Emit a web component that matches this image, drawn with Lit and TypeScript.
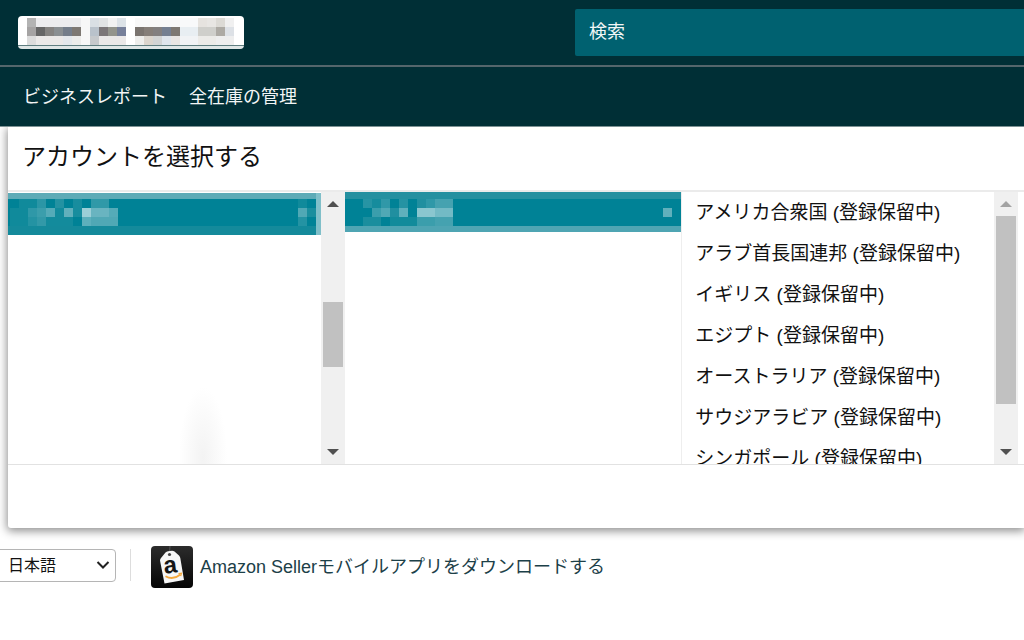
import { LitElement, html, svg, css } from "lit";
import { customElement, property } from "lit/decorators.js";

type Cell = [number, number, string, number?, number?];

const NAME_CELLS: Cell[] = [
  [0, 0, "#b3b3b3"], [0, 1, "#a5a3a3"], [0, 2, "#dcdcdc"],
  [1, 0, "#ececee", 5], [1, 1, "#666666"], [2, 1, "#858381"], [3, 1, "#8a8f92"], [4, 1, "#747d8a"], [5, 1, "#7d7872"],
  [1, 2, "#ebe9e8", 3], [4, 2, "#e4e8ec"], [5, 2, "#ececea"],
  [6, 0, "#f7f7f7", 1, 3],
  [7, 0, "#d9dfe4"], [7, 1, "#b9c2cb"], [7, 2, "#c6c9cc"],
  [8, 0, "#e1e3e4"], [8, 1, "#7b7678"], [9, 1, "#93948c"], [10, 1, "#77809a"],
  [9, 0, "#f2f2f2"], [10, 0, "#dde3e8"], [8, 2, "#eae8e8", 3],
  [11, 0, "#ffffff", 1, 3],
  [12, 0, "#f8f8f8", 5], [12, 1, "#7a746f"], [13, 1, "#857e78"], [14, 1, "#827f7f"], [15, 1, "#747f91"], [16, 1, "#7d7872"],
  [12, 2, "#eeeeec"], [13, 2, "#dbd5cd"], [14, 2, "#d2d4d4"], [15, 2, "#dfe5ec"], [16, 2, "#e9e6e3"],
  [17, 0, "#f8f9fa", 2], [17, 1, "#e8eef2", 2], [17, 2, "#f1f3f5", 2],
  [19, 0, "#e6e3df"], [20, 0, "#e8e6e3"], [21, 0, "#dcdad5"], [22, 0, "#f0f0f0"],
  [19, 1, "#cfcfcb", 2], [21, 1, "#adaaa4"], [22, 1, "#dde1e6"],
  [19, 2, "#ecebe8", 2], [21, 2, "#eeeeee", 2],
];
const FIRST_CELLS: Cell[] = [
  [0, 1, "#108a9b", 2, 2], [1, 0, "#108a9b", 2], [3, 0, "#2b96a6"], [5, 0, "#2492a2"], [7, 0, "#188d9e"], [9, 0, "#3099a8", 2],
  [2, 1, "#2f98a8"], [3, 1, "#3b9eac"], [4, 1, "#55abb8"], [5, 1, "#138b9c"], [6, 1, "#61b0bc"], [7, 1, "#188d9e"],
  [8, 1, "#9ccfd7"], [9, 1, "#69b4c0", 2], [11, 1, "#55abb8"],
  [2, 2, "#2493a3"], [3, 2, "#3299a8"], [4, 2, "#138b9c", 3], [8, 2, "#5db0bc"], [9, 2, "#50a8b5", 3],
];
const SECOND_CELLS: Cell[] = [
  [0, 0, "#2794a4"], [1, 0, "#168c9d"], [2, 0, "#3098a8"], [4, 0, "#2593a3"], [6, 0, "#208fa0"], [7, 0, "#2f98a8"], [8, 0, "#45a2b0", 2],
  [1, 1, "#3b9eac"], [2, 1, "#50a8b5"], [3, 1, "#208fa0"], [4, 1, "#60b0bc"], [6, 1, "#8ac6cf", 2], [8, 1, "#73bac5", 2],
  [0, 2, "#1a8e9e", 2], [3, 2, "#128b9b", 3], [6, 2, "#3b9eac", 2], [8, 2, "#45a2b0", 2],
];

const mosaic = (cells: Cell[], columns: number) => svg`
  <svg class="mosaic" width=${columns * 9} height="27" viewBox="0 0 ${columns} 3" preserveAspectRatio="none"
    shape-rendering="crispEdges" aria-hidden="true">
    ${cells.map(([x, y, fill, w = 1, h = 1]) => svg`<rect x=${x} y=${y} width=${w} height=${h} fill=${fill}></rect>`)}
  </svg>`;

@customElement("scroll-rail")
class ScrollRail extends LitElement {
  @property({ type: Number }) before = 0;
  @property({ type: Number }) size = 1;
  @property({ type: Number }) after = 0;
  @property({ type: Boolean, reflect: true }) top = false;

  static styles = css`
    :host { display: flex; flex-direction: column; width: 24px; background: #f0f0f0; }
    .arrow { height: 24px; display: grid; place-items: center; flex: none; }
    .arrow svg { display: block; fill: #505050; }
    :host([top]) .arrow:first-child svg { fill: #a3a3a3; }
    .track { flex: 1; display: flex; flex-direction: column; padding: 0 2px; }
    .thumb { background: #c1c1c1; }
  `;

  render() {
    return html`
      <div class="arrow"><svg width="12" height="6" viewBox="0 0 12 6"><path d="M0 6 6 0l6 6z" /></svg></div>
      <div class="track">
        <div style="flex:${this.before}"></div>
        <div class="thumb" style="flex:${this.size}"></div>
        <div style="flex:${this.after}"></div>
      </div>
      <div class="arrow"><svg width="12" height="6" viewBox="0 0 12 6"><path d="M0 0h12L6 6z" /></svg></div>
    `;
  }
}

@customElement("app-root")
class AppRoot extends LitElement {
  static styles = css`
    :host {
      display: block;
      min-height: 100vh;
      overflow: hidden;
      background: #fff;
      color: #111;
      font-family: "Liberation Sans", "Noto Sans CJK JP", sans-serif;
    }
    * { box-sizing: border-box; }
    button, input, select { font: inherit; color: inherit; border: 0; margin: 0; padding: 0; }
    a { text-decoration: none; color: inherit; }

    .top {
      display: grid;
      grid-template-columns: 575fr 449fr;
      align-items: center;
      height: 67px;
      background: #002f36;
      border-bottom: 2px solid #54666c;
    }
    .account {
      display: flex;
      align-items: flex-start;
      width: 226px;
      height: 33px;
      margin-left: 18px;
      padding: 2px 0 0 9px;
      border-radius: 4px;
      background: linear-gradient(#fff 29px, #5f7e80 29px, #5f7e80 30px, #dfe6e6 30px);
    }
    .mosaic { display: block; }
    .search {
      width: 100%;
      height: 47px;
      padding: 0 14px;
      border-radius: 2px 0 0 2px;
      background: #006170;
      color: #fff;
      font-size: 18px;
      outline: 0;
    }
    .search::placeholder { color: #f2f7f7; opacity: 1; }
    .nav {
      display: flex;
      align-items: center;
      gap: 22px;
      height: 60px;
      padding: 0 23px 4px;
      background: #002f36;
      border-bottom: 1px solid #7d9295;
      color: #f2f5f5;
      font-size: 18px;
    }

    .panel {
      margin-left: 8px;
      background: #fff;
      box-shadow: 0 2px 10px 1px rgba(0, 0, 0, 0.45);
      border-radius: 0 0 0 3px;
      clip-path: inset(0 0 -20px -20px);
    }
    h1 {
      margin: 0;
      height: 65px;
      padding: 0 14px;
      line-height: 60px;
      font-size: 24px;
      font-weight: 400;
      border-bottom: 2px solid #ebebeb;
    }
    .columns {
      display: grid;
      grid-template-columns: repeat(3, 1fr);
      height: 272px;
      padding-right: 6px;
    }
    .column { display: flex; min-width: 0; overflow: hidden; }
    .smudged { background: radial-gradient(ellipse 24px 70px at 195px 265px, #f3f3f3, #fff); }
    .body { flex: 1; min-width: 0; }
    .picked {
      display: flex;
      align-items: flex-start;
      justify-content: space-between;
      width: 100%;
      height: 40px;
      padding: 7px 9px 0 18px;
      background: linear-gradient(#2590a0 7px, #008296 7px, #008296 34px, #4fa5b3 34px);
    }
    .smudged .picked {
      height: 42px;
      margin-top: 1px;
      padding: 6px 0 0 2px;
      border-right: 5px solid #80bfc9;
      background: linear-gradient(#5eabb7 6px, #008296 6px, #008296 33px, #148a9b 33px);
    }
    .list {
      margin: 0;
      padding: 0 0 0 13px;
      list-style: none;
      border-left: 1px solid #eee;
      font-size: 19px;
      line-height: 41px;
      white-space: nowrap;
    }
    .foot { height: 64px; border-top: 1px solid #e2e2e2; }

    footer {
      display: flex;
      align-items: center;
      padding-top: 18px;
      font-size: 18px;
    }
    .language {
      flex: none;
      display: grid;
      align-items: center;
      width: 120px;
      margin-left: -4px;
      padding-bottom: 4px;
    }
    .language > * { grid-area: 1 / 1; }
    .language select {
      appearance: none;
      width: 100%;
      height: 33px;
      padding: 0 11px;
      border: 1px solid #b5b5b5;
      border-radius: 4px;
      background: #fff;
      font-size: 16px;
    }
    .language svg { justify-self: end; margin-right: 6px; pointer-events: none; z-index: 1; }
    .rule { height: 36px; margin: 0 20px 0 14px; padding-bottom: 4px; }
    .rule::before { content: ""; display: block; width: 1px; height: 32px; background: #ddd; }
    .app {
      display: flex;
      align-items: center;
      gap: 7px;
      color: #1c4048;
    }
    .app span { padding-bottom: 4px; }
    .logo { display: block; flex: none; }
  `;

  countries = ["アメリカ合衆国", "アラブ首長国連邦", "イギリス", "エジプト", "オーストラリア", "サウジアラビア", "シンガポール"];

  render() {
    return html`
      <header>
        <div class="top">
          <button class="account" aria-label="アカウント">${mosaic(NAME_CELLS, 23)}</button>
          <input class="search" type="search" placeholder="検索" aria-label="検索" />
        </div>
        <nav class="nav">
          <a href="#reports">ビジネスレポート</a>
          <a href="#inventory">全在庫の管理</a>
        </nav>
      </header>

      <main class="panel">
        <h1>アカウントを選択する</h1>
        <div class="columns">
          <div class="column smudged">
            <div class="body">
              <button class="picked" aria-label="アカウント">
                ${mosaic(FIRST_CELLS, 12)}
                ${mosaic([[0, 0, "#108a9b"], [0, 1, "#50a8b5"], [1, 1, "#1a8e9e"], [0, 2, "#2493a3"]], 2)}
              </button>
            </div>
            <scroll-rail .before=${86} .size=${65} .after=${73}></scroll-rail>
          </div>
          <div class="column">
            <div class="body">
              <button class="picked" aria-label="アカウント">
                ${mosaic(SECOND_CELLS, 10)}
                ${mosaic([[0, 1, "#60b0bc"]], 1)}
              </button>
            </div>
          </div>
          <div class="column">
            <ul class="list body">
              ${this.countries.map((name) => html`<li>${name} (登録保留中)</li>`)}
            </ul>
            <scroll-rail top .before=${0} .size=${188} .after=${36}></scroll-rail>
          </div>
        </div>
        <div class="foot"></div>
      </main>

      <footer>
        <div class="language">
          <select aria-label="言語"><option>日本語</option></select>
          <svg width="14" height="10" viewBox="0 0 14 10" fill="none" stroke="#222" stroke-width="2"><path d="m1.500 2 5.500 5.500L12.500 2" /></svg>
        </div>
        <div class="rule"></div>
        <a class="app" href="#app">
          <svg class="logo" width="42" height="42" viewBox="0 0 42 42" aria-hidden="true">
            <defs>
              <linearGradient id="shade" x2="0" y2="1"><stop stop-color="#2c2c2c" /><stop offset="1" stop-color="#050505" /></linearGradient>
            </defs>
            <rect width="42" height="42" rx="4" fill="url(#shade)" />
            <path d="M18.500 8 19 0" stroke="#555" stroke-width="1" />
            <path d="M9 14.500Q9 13 10 12L14.500 6.500Q15.500 5.500 17 5.300L21 4.800Q22.500 4.800 23.500 5.600L28 9.500Q29 10.500 29.300 12L33 34 13.500 37.500Z" fill="#f7f7f7" />
            <circle cx="18.500" cy="8.500" r="1.600" fill="#444" />
            <text x="13" y="27" font-family="Liberation Sans" font-size="24" font-weight="700" fill="#161616" transform="rotate(-7 20 24)">a</text>
            <path d="M14.500 30.300Q22 34.500 29.500 28.500" fill="none" stroke="#f5a83c" stroke-width="1.800" />
            <path d="m27.500 27.700 3-.5-.8 3" fill="none" stroke="#f5a83c" stroke-width="1.200" />
          </svg>
          <span>Amazon Sellerモバイルアプリをダウンロードする</span>
        </a>
      </footer>
    `;
  }
}
